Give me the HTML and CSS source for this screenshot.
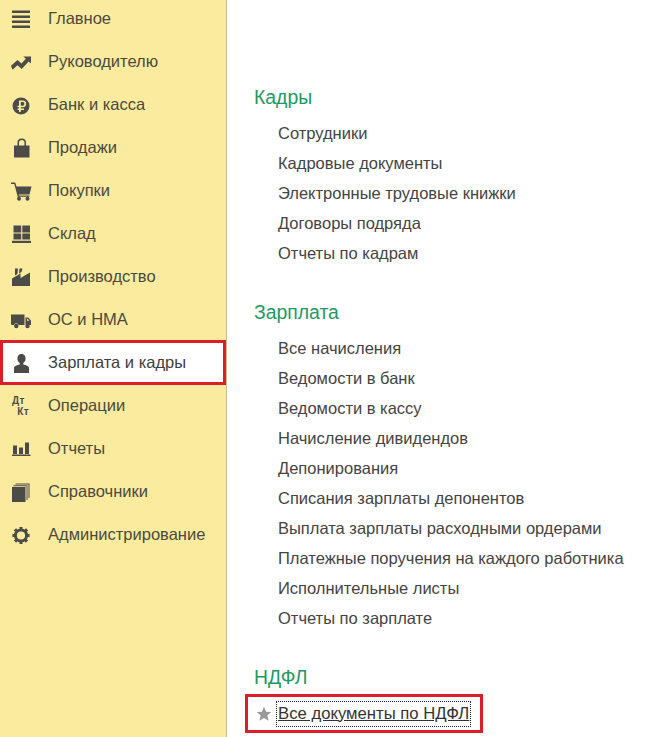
FILE: index.html
```html
<!DOCTYPE html>
<html lang="ru">
<head>
<meta charset="utf-8">
<title>Зарплата и кадры</title>
<link rel="stylesheet" href="styles.css">
</head>
<body>
<div class="app">
  <nav class="side">
    <a class="nav-item"><svg class="ico" viewBox="0 0 20 20"><path d="M0 1.500h18v2.500H0zM0 6.500h18v2.500H0zM0 11.500h18v2.500H0zM0 16.500h18v2.500H0z"/></svg>Главное</a>
    <a class="nav-item"><svg class="ico" viewBox="0 0 20 20"><path d="M-1 13.800 5.500 8l4 3.400 4.300-4.600-2.400-2.200H19v7l-2.300-2.100-7 7.400-4.200-3.700-5 4.500z"/></svg>Руководителю</a>
    <a class="nav-item"><svg class="ico" viewBox="0 0 20 20"><path fill-rule="evenodd" d="M9 2.500a8.500 8.500 0 1 1 0 17 8.500 8.500 0 0 1 0-17zM7 5.500h3.700c2.200 0 3.500 1.200 3.500 3.300s-1.300 3.400-3.500 3.400H8.800v1.300H12v1.400H8.800v2.100H7v-2.100H5.500v-1.400H7v-1.300H5.500v-1.500H7zM8.800 7v3.700h1.800c1.200 0 1.800-.7 1.800-1.900S11.800 7 10.600 7z"/></svg>Банк и касса</a>
    <a class="nav-item"><svg class="ico" viewBox="0 0 20 20"><path d="M2 7.500h3.500V4.500C5.500 2 7 .5 9.750.5S14 2 14 4.500v3h3.500v12H2zM7 7.500h5.500v-3C12.500 3 11.500 2 9.750 2S7 3 7 4.500z"/></svg>Продажи</a>
    <a class="nav-item"><svg class="ico" viewBox="0 0 20 20"><path d="M-1 1.500h4.200L4.500 5.500h15l-2 8H6.700l.3 1h10.500v1.300H5.700L2.300 2.900H-1zM7 15.800a2 2 0 1 1 0 4 2 2 0 0 1 0-4zM15.500 15.800a2 2 0 1 1 0 4 2 2 0 0 1 0-4z"/></svg>Покупки</a>
    <a class="nav-item"><svg class="ico" viewBox="0 0 20 20"><path d="M1.500 1.500h7.700v7H1.500zM10.300 1.500H18v7h-7.700zM1.500 9.600h7.700v5.900H1.500zM10.300 9.600H18v5.900h-7.700zM0 16.700h19V19H0z"/></svg>Склад</a>
    <a class="nav-item"><svg class="ico" viewBox="0 0 20 20"><path d="M0 19V11.500L8.500 6.500V11L18 5.500V19zM3 1.500h3L5.500 7 3 8.500zM7.500 1.500h3l-1 3.500-2.500 1.500z"/></svg>Производство</a>
    <a class="nav-item"><svg class="ico" viewBox="0 0 20 20"><path fill-rule="evenodd" d="M-1 4.500h13.500V15H6.700a2.600 2.600 0 0 0-4.900 0H0a1 1 0 0 1-1-1zM13.500 7.500h2.700l2.800 3V15h-1.300a2.600 2.600 0 0 0-4.200-.5zM15 8.800v2h2.300l-1.700-2zM4.300 13.800a2.200 2.200 0 1 1 0 4.400 2.200 2.200 0 0 1 0-4.400zM15.500 13.800a2.200 2.200 0 1 1 0 4.400 2.200 2.200 0 0 1 0-4.400z"/></svg>ОС и НМА</a>
    <a class="nav-item nav-item-on"><svg class="ico" viewBox="0 0 20 20"><path d="M9.500 1c2.600 0 4.100 2 4.100 4.500 0 2.100-1 3.800-2.300 4.600v1.400c2.900.6 5.200 1.600 5.700 3V20H2v-5.500c.5-1.400 2.800-2.400 5.700-3v-1.400C6.400 9.300 5.400 7.600 5.400 5.500 5.400 3 6.900 1 9.500 1z"/></svg>Зарплата и кадры</a>
    <a class="nav-item"><span class="dtkt"><span>Дт</span><span class="kt">Кт</span></span>Операции</a>
    <a class="nav-item"><svg class="ico" viewBox="0 0 20 20"><path d="M1 6.500h4V15H1zM7 8.500h4V15H7zM13 3.500h4V15h-4zM0 15.500h18.500V17H0z"/></svg>Отчеты</a>
    <a class="nav-item"><svg class="ico" viewBox="0 0 20 20"><path d="M0 5h13.500v15H0zM1.500 3.200h14V18h-1V4.200h-13zM3.500 1.500h14V16h-1V2.500h-13z"/></svg>Справочники</a>
    <a class="nav-item"><svg class="ico" viewBox="0 0 20 20"><circle class="gear-body" cx="9" cy="10.500" r="5.600"/><circle class="gear-teeth" cx="9" cy="10.500" r="7.400" pathLength="32" stroke-dasharray="2 2" stroke-dashoffset="1"/></svg>Администрирование</a>
  </nav>
  <main class="main">
    <section class="group">
      <h2 class="group-title">Кадры</h2>
      <a class="link">Сотрудники</a>
      <a class="link">Кадровые документы</a>
      <a class="link">Электронные трудовые книжки</a>
      <a class="link">Договоры подряда</a>
      <a class="link">Отчеты по кадрам</a>
    </section>
    <section class="group">
      <h2 class="group-title">Зарплата</h2>
      <a class="link">Все начисления</a>
      <a class="link">Ведомости в банк</a>
      <a class="link">Ведомости в кассу</a>
      <a class="link">Начисление дивидендов</a>
      <a class="link">Депонирования</a>
      <a class="link">Списания зарплаты депонентов</a>
      <a class="link">Выплата зарплаты расходными ордерами</a>
      <a class="link">Платежные поручения на каждого работника</a>
      <a class="link">Исполнительные листы</a>
      <a class="link">Отчеты по зарплате</a>
    </section>
    <section class="group">
      <h2 class="group-title">НДФЛ</h2>
      <div class="marked">
        <svg class="star" viewBox="0 0 16 16"><path d="M8 .8l2.100 4.900 5.200.4-4 3.400 1.300 5.200L8 11.900l-4.600 2.800 1.300-5.200-4-3.400 5.200-.4z"/></svg>
        <a class="link-focus">Все документы по НДФЛ</a>
      </div>
    </section>
  </main>
</div>
</body>
</html>
```

FILE: styles.css
```css
* {
  box-sizing: border-box;
}
html, body {
  margin: 0;
  height: 100%;
  overflow: hidden;
  background: #fff;
}
body {
  font-family: "Liberation Sans", Arial, sans-serif;
  color: #404040;
  font-size: 16.5px;
}
.app {
  display: flex;
  height: 737px;
}
.side {
  width: 227px;
  flex: none;
  background: #fbeb9f;
  border-right: 1px solid #c8c08c;
  overflow: hidden;
}
.nav-item {
  display: flex;
  align-items: center;
  height: 43px;
  padding-left: 12px;
  gap: 16px;
  color: #4a4a3e;
}
.nav-item:first-child {
  margin-top: -3px;
}
.ico {
  width: 20px;
  height: 20px;
  flex: none;
  fill: #4b4b47;
  overflow: visible;
}
.gear-body {
  fill: none;
  stroke: #4b4b47;
  stroke-width: 3;
}
.gear-teeth {
  fill: none;
  stroke: #4b4b47;
  stroke-width: 2.4;
}
.nav-item-on {
  background: #fff;
  border: 3px solid #dc1e2a;
  padding-left: 9px;
  height: 45px;
  margin: -1px 0;
  color: #404040;
}
.dtkt {
  width: 20px;
  height: 22px;
  flex: none;
  display: flex;
  flex-direction: column;
  font-size: 10px;
  letter-spacing: .4px;
  font-weight: bold;
  line-height: 11px;
  color: #4d4d4d;
}
.kt {
  align-self: flex-end;
  padding-right: 3px;
}
.main {
  flex: 1;
  padding: 85px 0 0 27px;
}
.group {
  margin-bottom: 32px;
}
.group-title {
  margin: 0 0 8px;
  font-size: 19.4px;
  font-weight: normal;
  line-height: 25px;
  color: #1d9a63;
}
.link {
  display: block;
  height: 30px;
  line-height: 30px;
  padding-left: 24px;
  color: #444;
}
.marked {
  display: flex;
  align-items: center;
  gap: 5px;
  width: 238px;
  height: 39px;
  margin: -4px 0 0 -9px;
  padding-left: 8px;
  border: 3px solid #dc1e2a;
}
.star {
  width: 16px;
  height: 16px;
  fill: #999;
  flex: none;
}
.link-focus {
  padding: 2px 1px;
  font-size: 16.7px;
  text-decoration: underline;
  outline: 1px dotted #222;
  color: #333;
}
```
